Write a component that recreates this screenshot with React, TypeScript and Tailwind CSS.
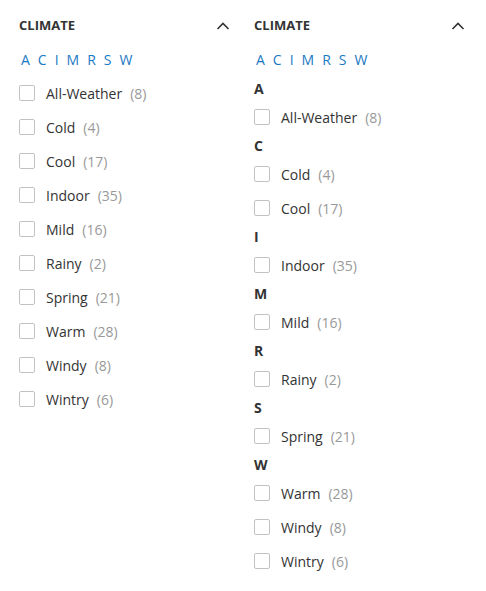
import React from "react";

const items: [string, number][] = [
  ["All-Weather", 8],
  ["Cold", 4],
  ["Cool", 17],
  ["Indoor", 35],
  ["Mild", 16],
  ["Rainy", 2],
  ["Spring", 21],
  ["Warm", 28],
  ["Windy", 8],
  ["Wintry", 6],
];

const letters = ["A", "C", "I", "M", "R", "S", "W"];

function Chevron() {
  return (
    <svg width="14" height="8" viewBox="0 0 14 8" className="mr-[-1px]">
      <polyline points="1.5,7 7,1.5 12.5,7" fill="none" stroke="#333" strokeWidth="1.6" />
    </svg>
  );
}

function Header() {
  return (
    <>
      <div className="flex items-center justify-between h-5 mt-[16px]">
        <span className="text-[13px] font-bold text-[#333] uppercase">Climate</span>
        <Chevron />
      </div>
      <div className="flex h-5 mt-[14px] pl-[2px] gap-[8px] text-[14px] leading-5 text-[#1979c3]">
        {letters.map((l) => (
          <span key={l}>{l}</span>
        ))}
      </div>
    </>
  );
}

function Item({ name, count }: { name: string; count: number }) {
  return (
    <div className="flex items-center h-[34px] text-[14px]">
      <span className="w-4 h-4 border border-[#c2c2c2] rounded-[2px] bg-white shrink-0 -mt-[1px]" />
      <span className="ml-[11px] text-[#333]">{name}</span>
      <span className="ml-[8px] text-[#999]">({count})</span>
    </div>
  );
}

export default function App() {
  const groups = letters.map((l) => ({
    letter: l,
    items: items.filter(([n]) => n[0] === l),
  }));
  return (
    <div
      className="w-[486px] h-[591px] bg-white flex gap-[25px] pl-[19px]"
      style={{ fontFamily: '"Open Sans", sans-serif' }}
    >
      <div className="w-[210px]">
        <Header />
        <div className="mt-[6px]">
          {items.map(([n, c]) => (
            <Item key={n} name={n} count={c} />
          ))}
        </div>
      </div>
      <div className="w-[210px]">
        <Header />
        <div className="mt-[7px]">
          {groups.map((g) => (
            <div key={g.letter}>
              <div className="h-[23px] flex items-center text-[14px] font-bold text-[#333]">{g.letter}</div>
              {g.items.map(([n, c]) => (
                <Item key={n} name={n} count={c} />
              ))}
            </div>
          ))}
        </div>
      </div>
    </div>
  );
}
